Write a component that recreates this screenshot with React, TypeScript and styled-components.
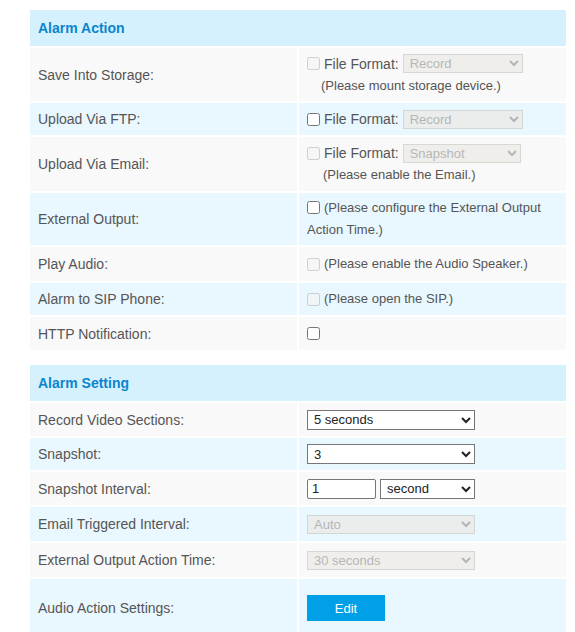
import React from "react";
import styled, { createGlobalStyle } from "styled-components";

const GlobalStyle = createGlobalStyle`
	body {
		margin: 0;
		background: #fff;
		font-family: "Liberation Sans", Arial, sans-serif;
	}
`;

const Page = styled.div`
	width: 540px;
	padding: 8px 0 0 28px;
`;

const Section = styled.div`
	display: flex;
	flex-direction: column;
	gap: 2px;
	padding: 2px;
	& + & {
		margin-top: 11px;
	}
`;

const Header = styled.div`
	height: 36px;
	display: flex;
	align-items: center;
	padding: 0 8px;
	background: #d5f1fe;
	color: #0b84cf;
	font-size: 14px;
	font-weight: bold;
`;

const Row = styled.div<{ $h: number }>`
	display: grid;
	grid-template-columns: 1fr 1fr;
	gap: 2px;
	height: ${(p) => p.$h}px;
`;

const Label = styled.div<{ $alt: boolean }>`
	display: flex;
	align-items: center;
	padding: 0 8px;
	background: ${(p) => (p.$alt ? "#e9f7fe" : "#f9f9f9")};
	color: #555;
	font-size: 14px;
`;

const Value = styled.div<{ $alt: boolean }>`
	display: flex;
	flex-direction: column;
	justify-content: center;
	padding: 0 8px;
	background: ${(p) => (p.$alt ? "#e9f7fe" : "#f9f9f9")};
	color: #555;
	font-size: 14px;
	line-height: 22px;
`;

const Line = styled.div`
	display: flex;
	align-items: center;
	min-height: 21px;
`;

const Check = styled.input.attrs({ type: "checkbox" })`
	width: 13px;
	height: 13px;
	margin: 0 4px 0 0;
	flex: none;
`;

const Note = styled.div<{ $indent?: number }>`
	padding-left: ${(p) => p.$indent ?? 0}px;
	font-size: 13px;
`;

const Select = styled.select<{ $w: number }>`
	width: ${(p) => p.$w}px;
	height: ${(p) => (p.disabled ? 19 : 20)}px;
	margin-left: 4px;
	padding: 0 0 0 2px;
	font-family: "Liberation Sans", Arial, sans-serif;
	font-size: 13px;
	color: ${(p) => (p.disabled ? "#9a9a9a" : "#222")};
	background: ${(p) => (p.disabled ? "#ebeae5" : "#fff")};
	border: 1px solid ${(p) => (p.disabled ? "#c9c9c5" : "#767676")};
	border-radius: 0;
	&:first-child {
		margin-left: 0;
	}
`;

const TextInput = styled.input`
	width: 69px;
	height: 20px;
	box-sizing: border-box;
	margin: 0;
	padding: 0 4px;
	font-family: "Liberation Sans", Arial, sans-serif;
	font-size: 13px;
	color: #222;
	border: 1px solid #767676;
	border-radius: 2px;
`;

const EditButton = styled.button`
	width: 78px;
	height: 26px;
	border: none;
	background: #00a0e9;
	color: #fff;
	font-family: "Liberation Sans", Arial, sans-serif;
	font-size: 13px;
	cursor: pointer;
`;

type FieldProps = {
	label: string;
	alt: boolean;
	h?: number;
	children: React.ReactNode;
};

const Field = ({ label, alt, h = 33, children }: FieldProps) => (
	<Row $h={h}>
		<Label $alt={alt}>{label}</Label>
		<Value $alt={alt}>{children}</Value>
	</Row>
);

const App = () => {
	return (
		<Page>
			<GlobalStyle />
			<Section>
				<Header>Alarm Action</Header>
				<Field label="Save Into Storage:" alt={false} h={53}>
					<Line>
						<Check disabled />
						File Format:
						<Select $w={120} disabled defaultValue="record">
							<option value="record">Record</option>
						</Select>
					</Line>
					<Note $indent={14}>(Please mount storage device.)</Note>
				</Field>
				<Field label="Upload Via FTP:" alt={true} h={32}>
					<Line>
						<Check />
						File Format:
						<Select $w={120} disabled defaultValue="record">
							<option value="record">Record</option>
						</Select>
					</Line>
				</Field>
				<Field label="Upload Via Email:" alt={false} h={54}>
					<Line>
						<Check disabled />
						File Format:
						<Select $w={118} disabled defaultValue="snapshot">
							<option value="snapshot">Snapshot</option>
						</Select>
					</Line>
					<Note $indent={16}>(Please enable the Email.)</Note>
				</Field>
				<Field label="External Output:" alt={true} h={52}>
					<Note>
						<Check style={{ verticalAlign: "-2px" }} />
						(Please configure the External Output Action Time.)
					</Note>
				</Field>
				<Field label="Play Audio:" alt={false} h={34}>
					<Line>
						<Check disabled />
						<Note>(Please enable the Audio Speaker.)</Note>
					</Line>
				</Field>
				<Field label="Alarm to SIP Phone:" alt={true} h={32}>
					<Line>
						<Check disabled />
						<Note>(Please open the SIP.)</Note>
					</Line>
				</Field>
				<Field label="HTTP Notification:" alt={false} h={33}>
					<Line>
						<Check />
					</Line>
				</Field>
			</Section>

			<Section>
				<Header>Alarm Setting</Header>
				<Field label="Record Video Sections:" alt={false} h={33}>
					<Line>
						<Select $w={168} defaultValue="5">
							<option value="5">5 seconds</option>
							<option value="10">10 seconds</option>
						</Select>
					</Line>
				</Field>
				<Field label="Snapshot:" alt={true} h={32}>
					<Line>
						<Select $w={168} defaultValue="3">
							<option value="1">1</option>
							<option value="3">3</option>
						</Select>
					</Line>
				</Field>
				<Field label="Snapshot Interval:" alt={false} h={33}>
					<Line>
						<TextInput defaultValue="1" />
						<Select $w={95} defaultValue="second">
							<option value="second">second</option>
							<option value="minute">minute</option>
						</Select>
					</Line>
				</Field>
				<Field label="Email Triggered Interval:" alt={true} h={34}>
					<Line>
						<Select $w={168} disabled defaultValue="auto">
							<option value="auto">Auto</option>
						</Select>
					</Line>
				</Field>
				<Field label="External Output Action Time:" alt={false} h={34}>
					<Line>
						<Select $w={168} disabled defaultValue="30">
							<option value="30">30 seconds</option>
						</Select>
					</Line>
				</Field>
				<Field label="Audio Action Settings:" alt={true} h={58}>
					<Line>
						<EditButton>Edit</EditButton>
					</Line>
				</Field>
			</Section>
		</Page>
	);
};

export default App;
